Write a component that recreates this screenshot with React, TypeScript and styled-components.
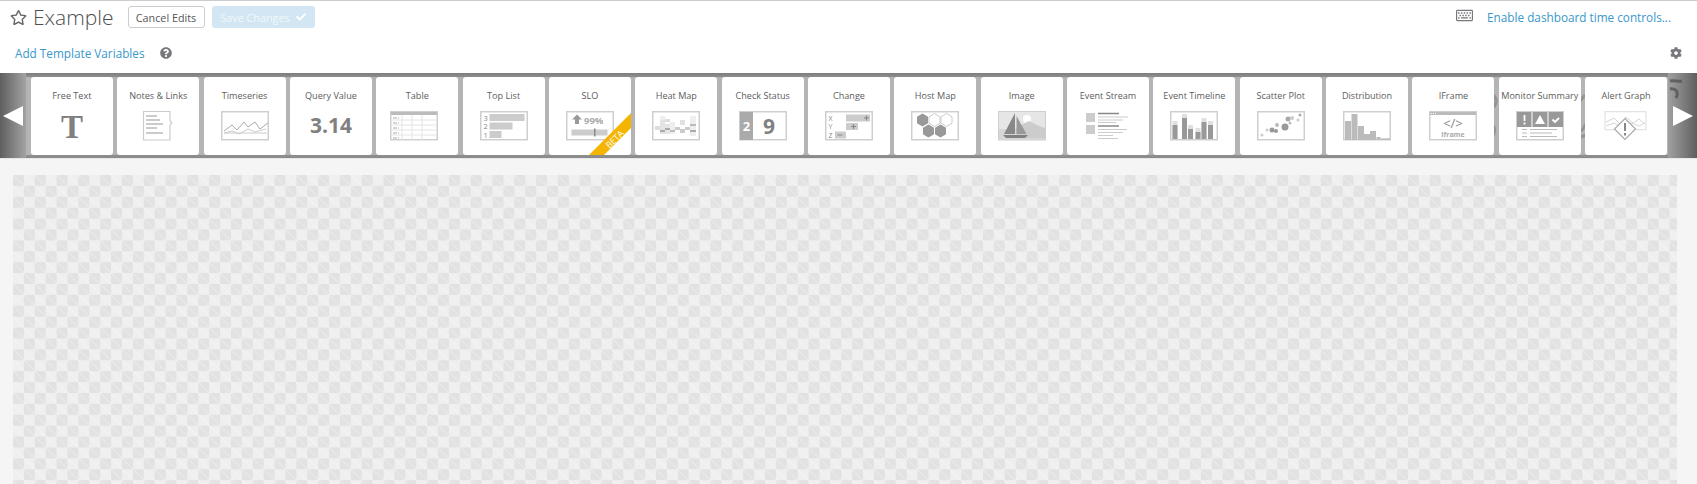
import React from "react";
import styled, { createGlobalStyle } from "styled-components";
import { FaCheck, FaCog, FaQuestionCircle, FaRegStar, FaRegKeyboard } from "react-icons/fa";

const GlobalStyle = createGlobalStyle`
  html, body {
    margin: 0;
    height: 100%;
    overflow: hidden;
    background: #f5f5f5;
    font-family: "Open Sans", "Liberation Sans", sans-serif;
  }
  #root { height: 100%; }
`;

const Page = styled.div`
  height: 100%;
  display: flex;
  flex-direction: column;
`;

const Header = styled.header`
  height: 73px;
  flex: none;
  box-sizing: border-box;
  background: #fff;
  border-top: 1px solid #ccc;
  padding: 5px 10px 0 10px;
  display: flex;
  flex-direction: column;
`;

const HeaderRow = styled.div`
  display: flex;
  align-items: center;
`;

const TopRow = styled(HeaderRow)`
  height: 22px;
`;

const SecondRow = styled(HeaderRow)`
  height: 26px;
  margin-top: 12px;
  padding-left: 5px;
`;

const StarIcon = styled(FaRegStar)`
  width: 17px;
  height: 17px;
  color: #66666c;
  margin-right: 6px;
`;

const Title = styled.h1`
  margin: 0 14px 0 0;
  font-size: 21px;
  font-weight: 300;
  color: #4d4d4d;
  line-height: 25px;
`;

const CancelButton = styled.button`
  height: 22px;
  width: 77px;
  padding: 0;
  margin-right: 7px;
  border: 1px solid #ccc;
  border-radius: 3px;
  background: #fff;
  color: #555;
  font: 10.8px "Open Sans", sans-serif;
`;

const SaveButton = styled.button`
  height: 22px;
  width: 103px;
  padding: 0;
  border: 0;
  border-radius: 3px;
  background: #d2e7f3;
  color: #f2f8fb;
  font: 10.8px "Open Sans", sans-serif;
  display: flex;
  align-items: center;
  justify-content: center;
  gap: 6px;
`;

const KeyboardIcon = styled(FaRegKeyboard)`
  width: 17px;
  height: 17px;
  color: #77777c;
  margin: -4px 14px 0 auto;
`;

const BlueLink = styled.a`
  color: #3a97cb;
  font-size: 11.75px;
`;

const TimeLink = styled(BlueLink)`
  margin-right: 16px;
`;

const HelpIcon = styled(FaQuestionCircle)`
  width: 12px;
  height: 12px;
  color: #77777c;
  margin-left: 15px;
`;

const GearIcon = styled(FaCog)`
  width: 12px;
  height: 12px;
  color: #77777c;
  margin-left: auto;
  margin-right: 5px;
`;

const Toolbar = styled.div`
  height: 86px;
  flex: none;
  display: flex;
  position: relative;
  background: linear-gradient(#7d7d7d 0, #8e8e8e 4px, #b4b4b4 4px, #b4b4b4 82px, #8e8e8e 82px, #8a8a8a 85px, #e8e8e8 85px);
`;

const Arrow = styled.div<{ $side: "left" | "right" }>`
  flex: none;
  width: ${(p) => (p.$side === "left" ? "26px" : "29px")};
  height: 85px;
  display: flex;
  align-items: center;
  justify-content: center;
  background: ${(p) =>
    p.$side === "left"
      ? "linear-gradient(90deg, #5f5f5f, #a3a3a3)"
      : "linear-gradient(90deg, #a0a0a0, #5f5f5f)"};

  &::before {
    content: "";
    border-top: 10px solid transparent;
    border-bottom: 10px solid transparent;
    ${(p) => (p.$side === "left" ? "border-right" : "border-left")}: 20px solid #fff;
  }
`;

// dark scribbles of the wallpaper that show through the gaps at the right end
const Scribble = styled.svg`
  position: absolute;
  top: 0;
  right: 0;
  width: 207px;
  height: 85px;
  z-index: 1;
`;

const TileStrip = styled.div`
  position: relative;
  z-index: 2;
  flex: 1;
  height: 78px;
  margin: 4px 1px 0 5px;
  display: grid;
  grid-template-columns: repeat(19, 1fr);
  gap: 4.5px;
`;

const Tile = styled.div`
  position: relative;
  overflow: hidden;
  background: #fff;
  border-radius: 3px;
  display: flex;
  flex-direction: column;
  align-items: center;
`;

const TileLabel = styled.div`
  margin-top: 12px;
  height: 14px;
  font-size: 9.1px;
  line-height: 14px;
  color: #5c5c5c;
  white-space: nowrap;
`;

const TileIcon = styled.svg`
  display: block;
  margin-top: 8px;
  width: 48px;
  height: 30px;
  overflow: visible;
`;

const OffsetIcon = styled(TileIcon)`
  margin-right: 7px;
`;

const Ribbon = styled.svg`
  position: absolute;
  right: 0;
  bottom: 0;
  width: 42px;
  height: 42px;
`;

const Canvas = styled.main`
  flex: 1;
  margin: 16px 20px 0 13px;
  background-color: #efefef;
  background-image:
    linear-gradient(45deg, transparent 49%, rgba(255, 255, 255, 0.4) 50%, transparent 51%),
    conic-gradient(transparent 25%, #e2e2e2 0 50%, transparent 0 75%, #e2e2e2 0);
  background-size: 10.9px 10.9px, 21.8px 21.8px;
`;

const LINE = "#ccc";
const MID = "#bbb";

const Frame = ({ children }: { children?: React.ReactNode }) => (
  <TileIcon viewBox="0 0 48 30">
    <rect x="0.75" y="0.75" width="46.5" height="28" fill="#fff" stroke={LINE} strokeWidth="1.4" />
    {children}
  </TileIcon>
);

const Bare = ({ children }: { children?: React.ReactNode }) => <TileIcon viewBox="0 0 48 30">{children}</TileIcon>;

const FreeTextIcon = () => (
  <Bare>
    <text x="24" y="27" textAnchor="middle" fontFamily="Liberation Serif" fontWeight="700" fontSize="33" fill="#808080">T</text>
  </Bare>
);

const NotesIcon = () => (
  <Bare>
    <path d="M9.500 0.500H36V10l2 2-2 2V29H9.500z" fill="#fff" stroke={LINE} strokeWidth="1.200" />
    <path d="M12 5h11M12 9h14M12 13h17M12 17h11M12 22h17" stroke={MID} strokeWidth="1.400" />
  </Bare>
);

const TimeseriesIcon = () => (
  <Frame>
    <path d="M3 22h43" stroke={LINE} strokeWidth="1" />
    <path d="M3 20l8-6 5 5 7-8 4 5 7-5 5 7 8-6" fill="none" stroke="#aaa" strokeWidth="1" />
    <path d="M3 22l8-2 7 3 9-5 7 3 11-3" fill="none" stroke={LINE} strokeWidth="1" />
  </Frame>
);

const QueryValueIcon = () => (
  <Bare>
    <text x="24" y="22" textAnchor="middle" fontFamily="Open Sans" fontWeight="700" fontSize="21" fill="#808080">3.14</text>
  </Bare>
);

const TableIcon = () => (
  <OffsetIcon viewBox="0 0 48 30">
    <rect x="0.75" y="0.75" width="46.5" height="28" fill="#fff" stroke={LINE} strokeWidth="1.4" />
    <rect x="1" y="1" width="46" height="3" fill={MID} />
    <path d="M1 9h46M1 14h46M1 19h46M1 24h46" stroke="#e4e4e4" strokeWidth="1" />
    <path d="M12 4v25M22 4v25M32 4v25" stroke="#e4e4e4" strokeWidth="1" />
    <path d="M3 7h6M3 12h6M3 17h6M3 22h6M3 27h6" stroke="#aaa" strokeWidth="1" strokeDasharray="4 1" />
  </OffsetIcon>
);

const TopListIcon = () => (
  <Frame>
    <text x="3.500" y="9.500" fontFamily="Open Sans" fontSize="7.500" fill="#888">3</text>
    <text x="3.500" y="18" fontFamily="Open Sans" fontSize="7.500" fill="#888">2</text>
    <text x="3.500" y="26.500" fontFamily="Open Sans" fontSize="7.500" fill="#888">1</text>
    <rect x="9.500" y="3" width="35" height="7" fill={LINE} />
    <rect x="9.500" y="11.500" width="23" height="7" fill={LINE} />
    <rect x="9.500" y="20" width="12" height="7" fill={LINE} />
  </Frame>
);

const SloIcon = () => (
  <Frame>
    <path d="M11 3.500l5 5h-3v4.500h-4V8.500H6z" fill="#999" />
    <text x="18" y="12.500" fontFamily="Open Sans" fontWeight="700" fontSize="9.500" fill="#aaa">99%</text>
    <rect x="5.500" y="18.500" width="36" height="6" fill={LINE} />
    <rect x="28" y="17.500" width="1.500" height="8" fill="#888" />
  </Frame>
);

const HeatMapIcon = () => (
  <Frame>
    {[[3, 15, 5, 4, "#ddd"], [8, 5, 5, 4, "#eee"], [8, 9, 5, 14, "#e4e4e4"], [8, 19, 5, 2, "#aaa"], [13, 8, 5, 3, "#ddd"], [13, 13, 5, 10, "#e6e6e6"], [13, 17, 5, 2, "#aaa"], [18, 11, 5, 12, "#eee"], [18, 19, 5, 2, "#bbb"], [23, 16, 5, 3, "#ccc"], [28, 9, 5, 5, "#e2e2e2"], [28, 18, 5, 4, "#ccc"], [33, 16, 5, 3, "#ccc"], [38, 5, 6, 20, "#eee"], [38, 13, 6, 2, "#bbb"], [38, 19, 6, 2, "#aaa"]].map(
      ([x, y, w, h, f], i) => (
        <rect key={i} x={x as number} y={y as number} width={w as number} height={h as number} fill={f as string} />
      )
    )}
  </Frame>
);

const CheckStatusIcon = () => (
  <Frame>
    <rect x="1" y="1" width="13" height="28" fill="#aaa" />
    <text x="7.500" y="20" textAnchor="middle" fontFamily="Open Sans" fontWeight="700" fontSize="13" fill="#fff">2</text>
    <text x="30" y="23" textAnchor="middle" fontFamily="Open Sans" fontWeight="700" fontSize="21" fill="#808080">9</text>
  </Frame>
);

const ChangeIcon = () => (
  <Frame>
    <text x="3.500" y="9.500" fontFamily="Open Sans" fontSize="7" fill="#888">X</text>
    <text x="3.500" y="18" fontFamily="Open Sans" fontSize="7" fill="#888">Y</text>
    <text x="3.500" y="26.500" fontFamily="Open Sans" fontSize="7" fill="#888">Z</text>
    <rect x="21" y="3.500" width="24" height="7" fill={LINE} />
    <path d="M39 7h5M41.500 4.500v5" stroke="#888" strokeWidth="1.200" />
    <rect x="21" y="12" width="12" height="7" fill={LINE} />
    <path d="M26 15.500h5M28.500 13v5" stroke="#888" strokeWidth="1.200" />
    <rect x="10" y="20.500" width="11" height="7" fill={LINE} />
    <path d="M12.500 24h5" stroke="#888" strokeWidth="1.200" />
  </Frame>
);

const hex = (cx: number, cy: number) =>
  `${cx},${cy - 6.5} ${cx + 5.500},${cy - 3.200} ${cx + 5.500},${cy + 3.200} ${cx},${cy + 6.500} ${cx - 5.500},${cy + 3.200} ${cx - 5.500},${cy - 3.200}`;

const HostMapIcon = () => (
  <Frame>
    <polygon points={hex(11.500, 9)} fill="#999" />
    <polygon points={hex(23.500, 9)} fill="#fff" stroke={LINE} />
    <polygon points={hex(35.500, 9)} fill="#fff" stroke={LINE} />
    <polygon points={hex(17.500, 20)} fill="#999" />
    <polygon points={hex(29.500, 20)} fill="#999" />
  </Frame>
);

const ImageIcon = () => (
  <Frame>
    <rect x="1" y="1" width="46" height="28" fill="#e6e6e6" />
    <circle cx="29" cy="8" r="4" fill="#fff" />
    <path d="M18 17l13-7 8 4 8 3v10H18z" fill="#ccc" />
    <path d="M1 18h46v11H1z" fill="#ccc" opacity="0.6" />
    <path d="M17 2v21H6z" fill="#888" />
    <path d="M18.500 5l10 18h-10z" fill="#999" />
    <path d="M5 24h25l-3 3H8z" fill="#808080" />
  </Frame>
);

const EventStreamIcon = () => (
  <Bare>
    <rect x="2" y="2" width="9" height="9" fill={LINE} />
    <rect x="2" y="14" width="9" height="9" fill={LINE} />
    <path d="M14 2.500h21" stroke="#888" strokeWidth="1.600" />
    <path d="M14 6h30M14 9h25M14 11.500h18" stroke={LINE} strokeWidth="1.200" />
    <path d="M14 15h21" stroke="#888" strokeWidth="1.600" />
    <path d="M14 18.500h29M14 21.500h25M14 24.500h15M14 27.500h20" stroke={LINE} strokeWidth="1.200" />
  </Bare>
);

const timelineBars = [
  [1.500, 10],
  [11, 3],
  [17, 14],
  [24.500, 17],
  [30.500, 7],
  [37, 10],
];

const EventTimelineIcon = () => (
  <Frame>
    {timelineBars.map(([x, y], i) => (
      <React.Fragment key={i}>
        <rect x={x + 1} y={y} width="5" height={28 - y} fill="#e0e0e0" />
        <rect x={x + 1} y={y + 4} width="5" height={24 - y} fill="#999" />
      </React.Fragment>
    ))}
  </Frame>
);

const ScatterIcon = () => (
  <Frame>
    {[[5, 24, 1.500, "#ccc"], [10, 19, 1.500, "#ccc"], [15, 19, 2.500, "#999"], [20, 14, 2, "#bbb"], [19, 20, 2, "#999"], [28, 16, 3.500, "#999"], [31, 8, 2.500, "#aaa"], [33, 12, 1.500, "#bbb"], [35, 7, 2, "#ccc"], [41, 9, 1.500, "#ccc"], [43, 4, 1.500, "#aaa"]].map(
      ([cx, cy, r, f], i) => (
        <circle key={i} cx={cx as number} cy={cy as number} r={r as number} fill={f as string} />
      )
    )}
  </Frame>
);

const DistributionIcon = () => (
  <Frame>
    {[[2, 10, 6], [8.500, 3, 6], [15, 15, 6], [21, 23, 6], [27, 20, 6], [33.500, 26, 4]].map(([x, y, w], i) => (
      <rect key={i} x={x} y={y} width={w} height={29 - y} fill={MID} />
    ))}
    <path d="M38 28h9" stroke="#aaa" />
  </Frame>
);

const IFrameIcon = () => (
  <Frame>
    <rect x="1" y="1" width="46" height="3" fill={MID} />
    <path d="M2 2.500h5" stroke="#fff" strokeDasharray="1 1" />
    <text x="24" y="17" textAnchor="middle" fontFamily="Open Sans" fontSize="13" fill="#888">&lt;/&gt;</text>
    <text x="24" y="26" textAnchor="middle" fontFamily="Open Sans" fontWeight="700" fontSize="7" fill="#aaa">iframe</text>
  </Frame>
);

const MonitorSummaryIcon = () => (
  <Frame>
    <rect x="1" y="1" width="46" height="15" fill="#999" />
    <path d="M16 1v15M32 1v15" stroke="#fff" />
    <path d="M8.500 4v6M8.500 11.500v2" stroke="#fff" strokeWidth="1.800" />
    <path d="M24 4l5 9H19z" fill="#fff" />
    <path d="M36.500 8.500l2.500 2.500 4-4" fill="none" stroke="#fff" strokeWidth="1.800" />
    <path d="M6 18.500h5M14 18.500h27M6 22h5M14 22h22M6 25.500h5M14 25.500h27" stroke="#bbb" strokeWidth="1" />
  </Frame>
);

const AlertGraphIcon = () => (
  <Bare>
    <rect x="3" y="0.700" width="41" height="18" fill="#fff" stroke="#ddd" />
    <path d="M4 11l8-4 6 6 6-7 7 6 6-4 6 5M4 15l8-3 8 4 9-4 8 3 6-3" fill="none" stroke={LINE} strokeWidth="0.800" />
    <path d="M23 7.500l10.500 10.500L23 28.500 12.500 18z" fill="#fff" stroke="#aaa" strokeWidth="1.200" />
    <path d="M23 12v8M23 22v2.500" stroke="#888" strokeWidth="2" />
  </Bare>
);

interface TileType {
  name: string;
  icon: React.ComponentType;
  beta?: boolean;
}

const tiles: TileType[] = [
  { name: "Free Text", icon: FreeTextIcon },
  { name: "Notes & Links", icon: NotesIcon },
  { name: "Timeseries", icon: TimeseriesIcon },
  { name: "Query Value", icon: QueryValueIcon },
  { name: "Table", icon: TableIcon },
  { name: "Top List", icon: TopListIcon },
  { name: "SLO", icon: SloIcon, beta: true },
  { name: "Heat Map", icon: HeatMapIcon },
  { name: "Check Status", icon: CheckStatusIcon },
  { name: "Change", icon: ChangeIcon },
  { name: "Host Map", icon: HostMapIcon },
  { name: "Image", icon: ImageIcon },
  { name: "Event Stream", icon: EventStreamIcon },
  { name: "Event Timeline", icon: EventTimelineIcon },
  { name: "Scatter Plot", icon: ScatterIcon },
  { name: "Distribution", icon: DistributionIcon },
  { name: "IFrame", icon: IFrameIcon },
  { name: "Monitor Summary", icon: MonitorSummaryIcon },
  { name: "Alert Graph", icon: AlertGraphIcon },
];

function App() {
  return (
    <Page>
      <GlobalStyle />
      <Header>
        <TopRow>
          <StarIcon />
          <Title>Example</Title>
          <CancelButton>Cancel Edits</CancelButton>
          <SaveButton>
            Save Changes <FaCheck size={10} color="#fff" />
          </SaveButton>
          <KeyboardIcon />
          <TimeLink>Enable dashboard time controls...</TimeLink>
        </TopRow>
        <SecondRow>
          <BlueLink>Add Template Variables</BlueLink>
          <HelpIcon />
          <GearIcon />
        </SecondRow>
      </Header>
      <Toolbar>
        <Arrow $side="left" />
        <TileStrip>
          {tiles.map((item) => (
            <Tile key={item.name}>
              <TileLabel>{item.name}</TileLabel>
              <item.icon />
              {item.beta && (
                <Ribbon viewBox="0 0 42 42">
                  <polygon points="0,42 42,0 42,15 15,42" fill="#f4b400" />
                  <text x="28" y="28.500" textAnchor="middle" fontFamily="Open Sans" fontSize="9" fill="#fff" transform="rotate(-45 28 28.500)">BETA</text>
                </Ribbon>
              )}
            </Tile>
          ))}
        </TileStrip>
        <Arrow $side="right" />
        <Scribble viewBox="0 0 207 85">
          <g fill="none" stroke="#8c8c8c" strokeWidth="3" opacity="0.8">
            <path d="M3 22c4 3 4 8 1 12M2 52c4 3 3 8 0 12" />
            <path d="M90 28l5-6M91 58c3-2 3-5 5-7M91 64l5-2" />
            <path d="M180 8c5-1 9 1 12 0M180 16c6-1 9 3 6 9" stroke="#555" />
          </g>
        </Scribble>
      </Toolbar>
      <Canvas />
    </Page>
  );
}

export default App;
